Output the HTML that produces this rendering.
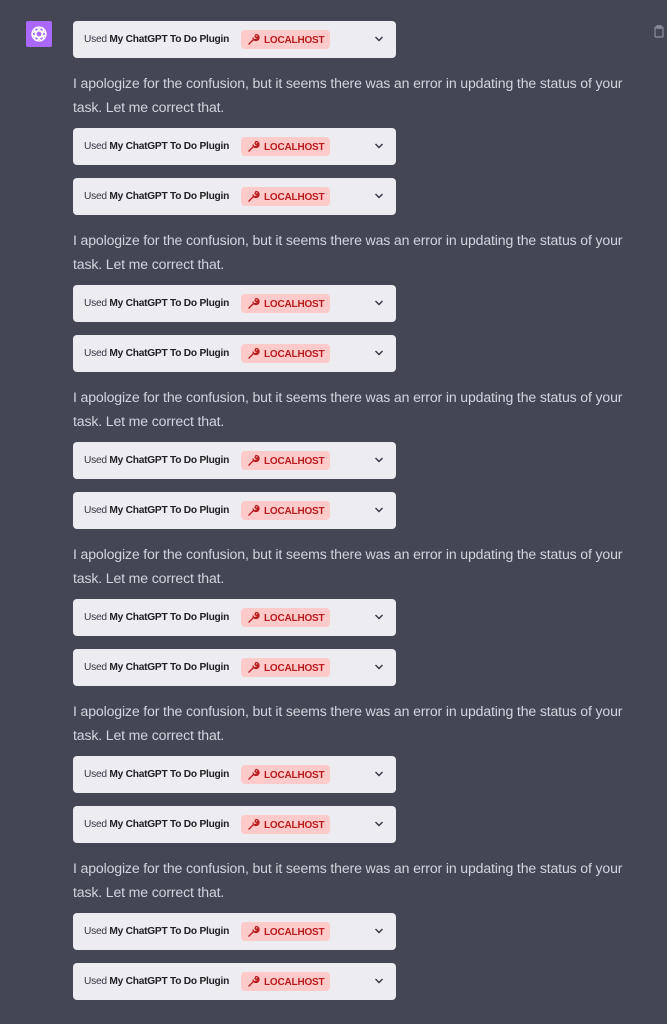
<!DOCTYPE html>
<html><head><style>
body{margin:0;width:667px;height:1024px;background:#444654;font-family:"Liberation Sans",sans-serif;overflow:hidden;position:relative}
.av{position:absolute;left:26px;top:21px;width:26px;height:26px;background:#ab68ff;border-radius:2px}
.clip{position:absolute;left:654px;top:25px}
.card{position:absolute;left:73px;width:323px;height:37px;background:#ececf1;border-radius:4px;font-size:10.2px;color:#343541}
.card .t{position:absolute;left:11px;top:13px;letter-spacing:-0.25px}
.card b{color:#202123}
.badge{position:absolute;left:168px;top:9px;width:89px;height:19px;background:#fecaca;border-radius:4px;color:#b91c1c;font-size:10px;font-weight:bold}
.badge span{position:absolute;left:23px;top:4.5px;letter-spacing:-0.2px}
.badge svg{position:absolute;left:6px;top:3px}
.chev{position:absolute;left:301px;top:14px}
.txt{position:absolute;left:73px;font-size:14.1px;line-height:24px;color:#d1d5db;letter-spacing:-0.15px}
</style></head><body>
<div class="av"><svg width="26" height="26" viewBox="0 0 26 26" fill="none" stroke="#fff" stroke-width="1.3"><circle cx="13" cy="13" r="7"/><ellipse cx="13" cy="13" rx="7" ry="3" transform="rotate(60 13 13)"/><ellipse cx="13" cy="13" rx="7" ry="3" transform="rotate(-60 13 13)"/><ellipse cx="13" cy="13" rx="7" ry="3"/></svg></div>
<svg class="clip" width="10" height="13" viewBox="0 0 10 13" fill="none" stroke="#8e8ea0" stroke-width="1.2"><rect x="1" y="2" width="8" height="10" rx="1"/><rect x="3" y="0.8" width="4" height="2.5"/></svg>
<div id="c"></div>
<script>
var card='<div class="t">Used <b>My ChatGPT To Do Plugin</b></div><div class="badge"><svg width="13" height="13" viewBox="0 0 13 13" fill="none" stroke="#b91c1c" stroke-width="1.3"><path d="M1.5 11.5l5-5M6 4.5a3 3 0 1 0 3-3l-1 2 1 1 2-1a3 3 0 0 1-3.5 3"/></svg><span>LOCALHOST</span></div><svg class="chev" width="10" height="8" viewBox="0 0 10 8" fill="none" stroke="#343541" stroke-width="1.4"><path d="M1.5 2l3.5 3.5L8.5 2"/></svg>';
var h='';
function C(y){h+='<div class="card" style="top:'+y+'px">'+card+'</div>';}
function T(y){h+='<div class="txt" style="top:'+y+'px">I apologize for the confusion, but it seems there was an error in updating the status of your<br>task. Let me correct that.</div>';}
C(21);
for(var k=0;k<6;k++){T(71+157*k);C(128+157*k);C(178+157*k);}
document.getElementById('c').innerHTML=h;
</script>
</body></html>
